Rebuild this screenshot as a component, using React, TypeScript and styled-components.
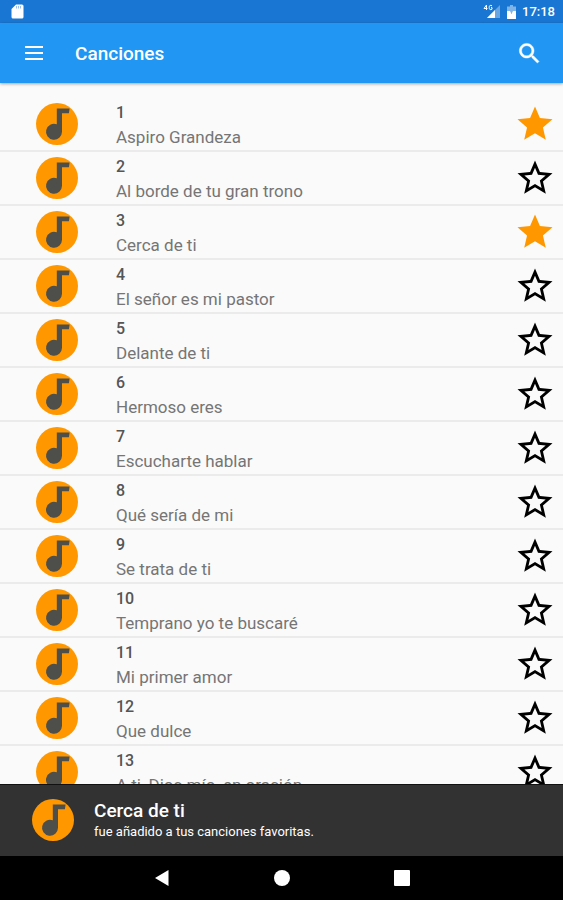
import React, { useState } from "react";
import styled, { createGlobalStyle } from "styled-components";

const GlobalStyle = createGlobalStyle`
  *, *::before, *::after { box-sizing: border-box; }
  body { margin: 0; background: #fafafa; font-family: Roboto, sans-serif; }
  button { padding: 0; border: 0; background: none; color: inherit; font: inherit; cursor: pointer; }
  svg { display: block; }
`;

const Screen = styled.div`
  display: flex;
  flex-direction: column;
  height: 100vh;
  overflow: hidden;
  background: #fafafa;
`;

const StatusBar = styled.div`
  display: flex;
  flex: none;
  align-items: center;
  justify-content: space-between;
  height: 23px;
  padding: 0 8px 0 11px;
  background: #1976d2;
  color: #fff;
`;

const StatusGroup = styled.div`
  display: flex;
  align-items: center;
  gap: 6px;
`;

const Clock = styled.time`
  font-size: 13px;
  font-weight: 500;
  line-height: 24px;
`;

const AppBar = styled.header`
  display: flex;
  flex: none;
  align-items: center;
  height: 60px;
  padding: 0 20px;
  background: #2196f3;
  color: #fff;
  box-shadow: 0 1px 3px rgba(0, 0, 0, 0.35);
  z-index: 1;
`;

const IconButton = styled.button`
  display: grid;
  place-items: center;
  flex: none;
  width: 28px;
  height: 28px;
`;

const Title = styled.h1`
  flex: 1;
  margin: 0;
  padding: 2px 0 0 27px;
  font-size: 19px;
  font-weight: 500;
  line-height: 24px;
`;

const SongList = styled.ul`
  flex: 1;
  min-height: 0;
  margin: 0;
  padding: 15px 0 0;
  overflow: hidden;
  list-style: none;
`;

const SongRow = styled.li`
  display: flex;
  align-items: center;
  height: 54px;
  padding: 0 7px 0 36px;
  border-bottom: 2px solid #ebebeb;
`;

const SongText = styled.div`
  flex: 1;
  min-width: 0;
  padding: 2px 0 0 38px;
`;

const SongNumber = styled.div`
  color: #555;
  font-size: 16px;
  font-weight: 500;
  line-height: 25px;
`;

const SongName = styled.div`
  color: #757575;
  font-size: 17px;
  line-height: 25px;
  white-space: nowrap;
`;

const StarButton = styled.button<{ $active: boolean }>`
  flex: none;
  color: ${(p) => (p.$active ? "#ff9800" : "#000")};
`;

const Snackbar = styled.div`
  display: flex;
  flex: none;
  align-items: center;
  gap: 20px;
  height: 72px;
  padding: 0 32px 2px;
  border-top: 1px solid #111;
  background: #323232;
  color: #fff;
`;

const SnackTitle = styled.div`
  padding-top: 2px;
  font-size: 19px;
  font-weight: 500;
  line-height: 22px;
`;

const SnackMessage = styled.div`
  font-size: 13px;
  line-height: 20px;
`;

const NavBar = styled.nav`
  display: flex;
  flex: none;
  align-items: center;
  justify-content: center;
  gap: 92px;
  height: 44px;
  background: #000;
  color: #fff;
`;

const songs = [
  "Aspiro Grandeza",
  "Al borde de tu gran trono",
  "Cerca de ti",
  "El señor es mi pastor",
  "Delante de ti",
  "Hermoso eres",
  "Escucharte hablar",
  "Qué sería de mi",
  "Se trata de ti",
  "Temprano yo te buscaré",
  "Mi primer amor",
  "Que dulce",
  "A ti, Dios mío, en oración",
];

const NoteIcon = () => (
  <svg width="42" height="42" viewBox="0 0 42 42" aria-hidden="true">
    <circle cx="21" cy="21" r="21" fill="#ff9800" />
    <path d="M20.800 5.500H33.600L32.900 10.200H26V28.800A8 8 0 1 1 20.800 21.300Z" fill="#4e4e4a" />
  </svg>
);

const StarIcon = ({ filled }: { filled: boolean }) => (
  <svg width="42" height="42" viewBox="0 0 24 24" fill="currentColor" aria-hidden="true">
    {filled ? (
      <path d="M12 17.27 18.18 21l-1.64-7.03L22 9.24l-7.19-.61L12 2 9.19 8.63 2 9.24l5.46 4.73L5.82 21z" />
    ) : (
      <path d="m22 9.24-7.19-.62L12 2 9.19 8.63 2 9.24l5.46 4.73L5.82 21 12 17.27 18.18 21l-1.63-7.03L22 9.24zM12 15.4l-3.76 2.27 1-4.28-3.32-2.88 4.38-.38L12 6.1l1.71 4.04 4.38.38-3.32 2.88 1 4.28L12 15.4z" />
    )}
  </svg>
);

const CardIcon = () => (
  <svg width="13" height="15" viewBox="0 0 13 15" aria-hidden="true">
    <path d="M5 .5h6a1.500 1.500 0 0 1 1.500 1.500v11a1.500 1.500 0 0 1-1.500 1.500H2A1.500 1.500 0 0 1 .5 13V5z" fill="#fff" />
    <path d="M5.500 2v2.500M7.500 2v2.500M9.500 2v2.500" stroke="#9dbfe8" />
  </svg>
);

const SignalIcon = () => (
  <svg width="18" height="15" viewBox="0 0 18 15" aria-hidden="true">
    <path d="M17 1v13H4z" fill="#fff" opacity=".35" />
    <path d="M12 6v8H4z" fill="#fff" />
    <path d="M3.500 1 1 4.500H4.500M3.500 1V6M9 1.800Q6.200.4 6.200 3.500T9 5.200V3.600H8" fill="none" stroke="#fff" />
  </svg>
);

const BatteryIcon = () => (
  <svg width="9" height="14" viewBox="0 0 9 14" aria-hidden="true">
    <path d="M3 0h3v1.500h3V14H0V1.500h3z" fill="#fff" opacity=".45" />
    <path d="M0 6h3l1.500 3L6 6h3v8H0z" fill="#fff" />
  </svg>
);

export default function App() {
  const [favorites, setFavorites] = useState<number[]>([1, 3]);
  const toggle = (n: number) =>
    setFavorites((list) => (list.includes(n) ? list.filter((f) => f !== n) : [...list, n]));

  return (
    <Screen>
      <GlobalStyle />
      <StatusBar>
        <CardIcon />
        <StatusGroup>
          <SignalIcon />
          <BatteryIcon />
          <Clock>17:18</Clock>
        </StatusGroup>
      </StatusBar>
      <AppBar>
        <IconButton aria-label="Menú">
          <svg width="18" height="14" viewBox="0 0 18 14" fill="#fff" aria-hidden="true">
            <path d="M0 0h18v2H0zM0 6h18v2H0zM0 12h18v2H0z" />
          </svg>
        </IconButton>
        <Title>Canciones</Title>
        <IconButton aria-label="Buscar">
          <svg width="27" height="27" viewBox="0 0 24 24" fill="#fff" stroke="#fff" strokeWidth=".4" aria-hidden="true">
            <path d="M15.500 14h-.79l-.28-.27C15.410 12.590 16 11.110 16 9.500 16 5.910 13.090 3 9.500 3S3 5.910 3 9.500 5.910 16 9.500 16c1.610 0 3.090-.59 4.230-1.570l.27.28v.79l5 4.990L20.490 19l-4.990-5zm-6 0C7.010 14 5 11.990 5 9.500S7.010 5 9.500 5 14 7.010 14 9.500 11.990 14 9.500 14z" />
          </svg>
        </IconButton>
      </AppBar>
      <SongList>
        {songs.map((name, i) => {
          const n = i + 1;
          const active = favorites.includes(n);
          return (
            <SongRow key={n}>
              <NoteIcon />
              <SongText>
                <SongNumber>{n}</SongNumber>
                <SongName>{name}</SongName>
              </SongText>
              <StarButton
                $active={active}
                aria-pressed={active}
                aria-label={`Favorita: ${name}`}
                onClick={() => toggle(n)}
              >
                <StarIcon filled={active} />
              </StarButton>
            </SongRow>
          );
        })}
      </SongList>
      <Snackbar role="status">
        <NoteIcon />
        <div>
          <SnackTitle>Cerca de ti</SnackTitle>
          <SnackMessage>fue añadido a tus canciones favoritas.</SnackMessage>
        </div>
      </Snackbar>
      <NavBar>
        <IconButton aria-label="Atrás">
          <svg width="16" height="16" viewBox="0 0 16 16" fill="#fff" aria-hidden="true">
            <path d="M14.500 0v16L1 8z" />
          </svg>
        </IconButton>
        <IconButton aria-label="Inicio">
          <svg width="16" height="16" viewBox="0 0 16 16" fill="#fff" aria-hidden="true">
            <circle cx="8" cy="8" r="8" />
          </svg>
        </IconButton>
        <IconButton aria-label="Recientes">
          <svg width="16" height="16" viewBox="0 0 16 16" fill="#fff" aria-hidden="true">
            <rect width="16" height="16" rx="1" />
          </svg>
        </IconButton>
      </NavBar>
    </Screen>
  );
}
